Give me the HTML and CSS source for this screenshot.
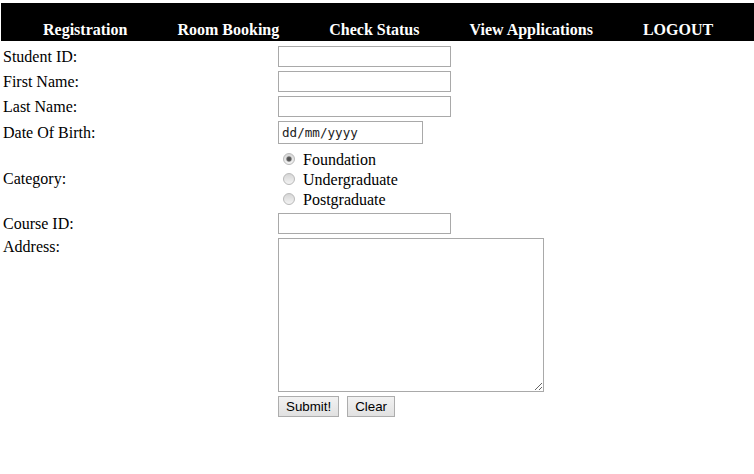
FILE: index.html
```html
<!DOCTYPE html>
<html lang="en">
<head>
<meta charset="utf-8">
<title>Registration</title>
<link rel="stylesheet" href="styles.css">
</head>
<body>
<nav class="topnav">
  <a class="nav-link" href="#">Registration</a>
  <a class="nav-link" href="#">Room Booking</a>
  <a class="nav-link" href="#">Check Status</a>
  <a class="nav-link" href="#">View Applications</a>
  <a class="nav-link" href="#">LOGOUT</a>
</nav>
<form class="reg-form">
  <label class="lbl">Student ID:</label>
  <input class="field" type="text">
  <label class="lbl">First Name:</label>
  <input class="field" type="text">
  <label class="lbl">Last Name:</label>
  <input class="field" type="text">
  <label class="lbl">Date Of Birth:</label>
  <input class="field date" type="text" value="dd/mm/yyyy" readonly>
  <label class="lbl">Category:</label>
  <div class="radios">
    <label class="radio-line"><input class="radio" type="radio" name="cat" checked> Foundation</label>
    <label class="radio-line"><input class="radio" type="radio" name="cat"> Undergraduate</label>
    <label class="radio-line"><input class="radio" type="radio" name="cat"> Postgraduate</label>
  </div>
  <label class="lbl">Course ID:</label>
  <input class="field" type="text">
  <label class="lbl lbl-top">Address:</label>
  <textarea class="address"></textarea>
  <span class="lbl"></span>
  <div class="buttons">
    <button class="btn" type="submit">Submit!</button>
    <button class="btn" type="reset">Clear</button>
  </div>
</form>
</body>
</html>
```
FILE: styles.css
```css
html, body {
  margin: 0;
  padding: 0;
  background: #fff;
}
body {
  font-family: "Liberation Serif", "Times New Roman", serif;
  font-size: 16px;
  color: #000;
}
.topnav {
  margin: 3px 0 0 1px;
  height: 38px;
  box-sizing: border-box;
  padding: 18px 0 2px 42px;
  background: #000;
  display: flex;
  gap: 50px;
}
.nav-link {
  color: #fff;
  font-weight: bold;
  font-size: 16px;
  line-height: 18px;
  text-decoration: none;
  white-space: nowrap;
}
.reg-form {
  display: grid;
  grid-template-columns: 275px 1fr;
  row-gap: 4px;
  padding: 5px 0 0 3px;
  align-items: center;
}
.lbl {
  line-height: 18px;
}
.lbl-top {
  align-self: start;
}
.field {
  box-sizing: border-box;
  width: 173px;
  height: 21px;
  margin: 0;
  padding: 1px 2px;
  border: 1px solid #a9a9a9;
  background: #fff;
  font-family: "Liberation Sans", Arial, sans-serif;
  font-size: 13px;
  outline: none;
}
.date {
  width: 145px;
  height: 23px;
  padding: 0 3px;
  font-family: "DejaVu Sans Mono", monospace;
  font-size: 12.6px;
  color: #222;
}
.radios {
  padding-top: 2px;
  height: 61px;
  box-sizing: border-box;
}
.radio-line {
  display: block;
  line-height: 20px;
  white-space: nowrap;
}
.radio {
  -webkit-appearance: none;
  appearance: none;
  box-sizing: border-box;
  width: 12px;
  height: 12px;
  margin: 3px 4px 0 5px;
  border: 1px solid #b9b9b9;
  border-radius: 50%;
  background: linear-gradient(#d6d6d6, #f3f3f3);
  vertical-align: baseline;
  outline: none;
}
.radio:checked {
  background: radial-gradient(circle, #4a4a4a 0, #5c5c5c 2px, rgba(90,90,90,0) 3.2px), linear-gradient(#d6d6d6, #f3f3f3);
}
.address {
  box-sizing: border-box;
  width: 266px;
  height: 154px;
  margin: 0;
  border: 1px solid #a9a9a9;
  padding: 2px;
  font-family: "Liberation Mono", monospace;
  font-size: 13px;
  outline: none;
}
.buttons {
  display: flex;
  gap: 8px;
}
.btn {
  box-sizing: border-box;
  height: 21px;
  margin: 0;
  padding: 1px 7px;
  border: 1px solid #adadad;
  border-radius: 0;
  background: linear-gradient(#f2f2f2, #e1e1e1);
  font-family: "Liberation Sans", Arial, sans-serif;
  font-size: 13.33px;
  color: #000;
  line-height: 15px;
}
```
